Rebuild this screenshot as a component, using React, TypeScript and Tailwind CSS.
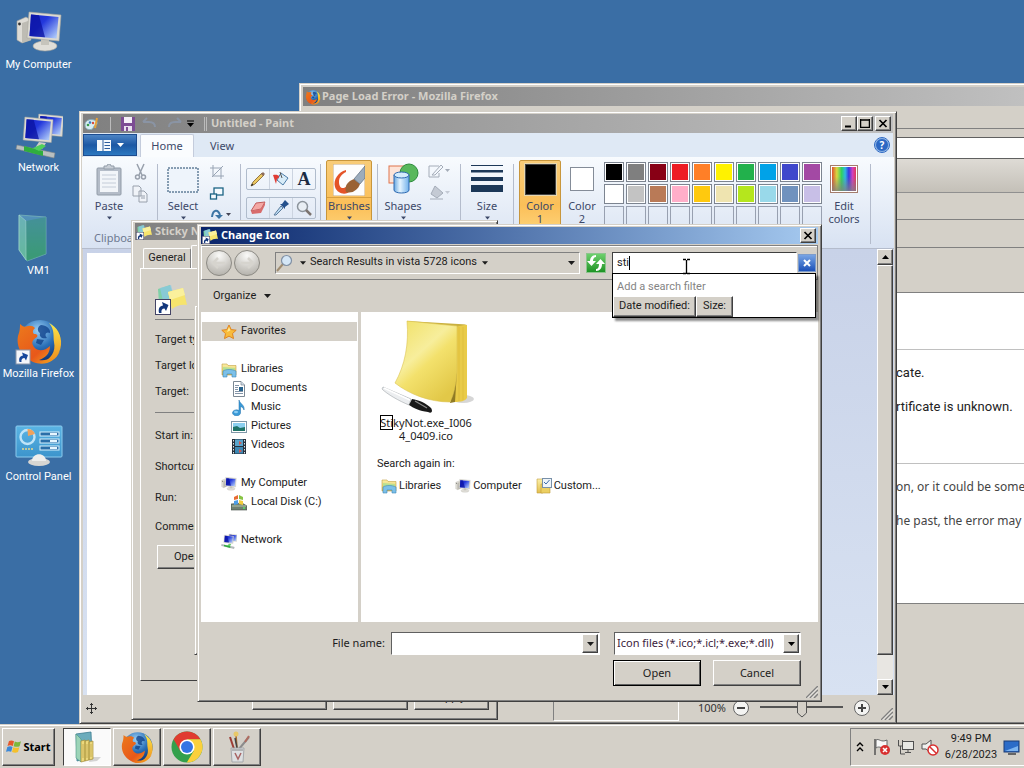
import type { ReactNode } from 'react';
import clsx from 'clsx';

const RAISED = 'border border-t-white border-l-white border-r-[#404040] border-b-[#404040] shadow-[inset_-1px_-1px_0_#808080]';
const SUNKEN = 'border border-t-[#808080] border-l-[#808080] border-r-white border-b-white';
const FRAME = 'absolute flex flex-col bg-[#d4d0c8] border border-t-[#d4d0c8] border-l-[#d4d0c8] border-r-[#404040] border-b-[#404040] shadow-[inset_1px_1px_0_#fff,inset_-1px_-1px_0_#808080] p-[2px]';
const NOTO = "font-['Noto_Sans','DejaVu_Sans',sans-serif]";

/* ---------- icons ---------- */

function Monitor({ x = 0, y = 0, s = 1 }: { x?: number; y?: number; s?: number }) {
  return (
    <g transform={`translate(${x} ${y}) scale(${s})`}>
      <path d="M1 0 L33 3 L31 29 L-1 26 Z" fill="#dcdad2" stroke="#a8a69e" strokeWidth=".6" />
      <path d="M3 2.5 L30.500 5 L28.500 26.500 L1.500 24 Z" fill="url(#screen)" />
      <path d="M3 2.5 L11 3.200 L17 25.300 L1.500 24 Z" fill="#0a12a0" opacity=".75" />
    </g>
  );
}

function Defs() {
  return (
    <svg width="0" height="0" className="absolute" aria-hidden="true">
      <defs>
        <linearGradient id="screen" x1="0" y1="0" x2="1" y2=".8"><stop offset="0" stopColor="#1a24c8" /><stop offset=".45" stopColor="#2338dc" /><stop offset="1" stopColor="#a9c4f8" /></linearGradient>
        <linearGradient id="note" x1="0" y1="0" x2=".7" y2="1"><stop offset="0" stopColor="#f0df62" /><stop offset=".45" stopColor="#f7ee9c" /><stop offset=".6" stopColor="#f3e16c" /><stop offset="1" stopColor="#e2c848" /></linearGradient>
        <linearGradient id="glass" x1="0" y1="0" x2="0" y2="1"><stop offset="0" stopColor="#5f9fc8" /><stop offset="1" stopColor="#45b866" /></linearGradient>
        <radialGradient id="globe" cx=".45" cy=".25" r=".8"><stop offset="0" stopColor="#9bd0f5" /><stop offset=".5" stopColor="#2a70b8" /><stop offset="1" stopColor="#0a2a6a" /></radialGradient>
        <linearGradient id="fox" x1="0" y1="0" x2="1" y2="1"><stop offset="0" stopColor="#ec7a1c" /><stop offset=".6" stopColor="#e8581a" /><stop offset="1" stopColor="#f8b820" /></linearGradient>
        <linearGradient id="foxTail" x1="0" y1="0" x2="0" y2="1"><stop offset="0" stopColor="#fbe84a" /><stop offset="1" stopColor="#ee8a1a" /></linearGradient>
        <linearGradient id="panel" x1="0" y1="0" x2="0" y2="1"><stop offset="0" stopColor="#5ab4e4" /><stop offset="1" stopColor="#3c94cc" /></linearGradient>
        <linearGradient id="folder" x1="0" y1="0" x2="0" y2="1"><stop offset="0" stopColor="#fbf0a8" /><stop offset="1" stopColor="#e2be4c" /></linearGradient>
        <linearGradient id="rainbow"><stop offset="0" stopColor="#e05030" /><stop offset=".2" stopColor="#d8d840" /><stop offset=".4" stopColor="#30d060" /><stop offset=".55" stopColor="#30b8e0" /><stop offset=".7" stopColor="#3838e0" /><stop offset=".85" stopColor="#d040c0" /><stop offset="1" stopColor="#e03858" /></linearGradient>
        <linearGradient id="fade" x1="0" y1="0" x2="0" y2="1"><stop offset="0" stopColor="#808080" stopOpacity="0" /><stop offset=".4" stopColor="#808080" stopOpacity="0" /><stop offset="1" stopColor="#808080" stopOpacity=".8" /></linearGradient>
        <linearGradient id="can"><stop offset="0" stopColor="#6aa8e0" /><stop offset=".4" stopColor="#e4f4ff" /><stop offset="1" stopColor="#70b0ea" /></linearGradient>
        <radialGradient id="orb" cx=".5" cy=".2" r=".8"><stop offset="0" stopColor="#fafaf8" /><stop offset=".6" stopColor="#cfcdc8" /><stop offset="1" stopColor="#b4b2ac" /></radialGradient>
      </defs>
    </svg>
  );
}

function ComputerIcon({ size = 48 }: { size?: number }) {
  return (
    <svg width={size} height={size} viewBox="0 0 48 48">
      <path d="M2 13 L11 9 L16 12 V32 L7 35 L2 32 Z" fill="#dedcd6" stroke="#a3a199" strokeWidth=".6" />
      <path d="M7 15 L16 12 V32 L7 35 Z" fill="#bebcb4" />
      <circle cx="4.500" cy="16" r="1.400" fill="#333" />
      <ellipse cx="30" cy="38" rx="12" ry="5" fill="#e0ded8" stroke="#a3a199" strokeWidth=".6" />
      <path d="M26 30 H34 V37 H26 Z" fill="#c6c4bc" />
      <Monitor x={13} y={4} />
    </svg>
  );
}

function NetworkIcon({ size = 48 }: { size?: number }) {
  return (
    <svg width={size} height={size} viewBox="0 0 48 48">
      <Monitor x={23} y={3} s={0.78} />
      <Monitor x={9} y={6} s={0.88} />
      <path d="M24 31 L31 32 L27 38 L20 37 Z" fill="#cfcdc6" />
      <path d="M2 34 L40 42 L39 47 L1 38 Z" fill="#b9bfc0" stroke="#7f8588" strokeWidth=".6" />
      <path d="M9 35 L28 40 L28 45 L9 40 Z" fill="#2fae3e" />
      <path d="M18 37 L27 33 L31 35 L24 40 Z" fill="#4fd05a" />
    </svg>
  );
}

function VmFolder() {
  return (
    <svg width="48" height="48" viewBox="0 0 48 48">
      <path d="M4 1 L31 3 V40 L12 47 L4 36 Z" fill="url(#glass)" opacity=".7" stroke="#8fd0c0" strokeWidth=".8" />
      <path d="M4 1 L11 7 V46 L4 36 Z" fill="#7cc8b4" opacity=".6" stroke="#c8f0e0" strokeWidth=".7" />
      <path d="M11 7 L31 3 V40 L12 47 Z" fill="#2f9068" opacity=".4" />
    </svg>
  );
}

function FirefoxIcon({ size = 48, shortcut = false }: { size?: number; shortcut?: boolean }) {
  return (
    <svg width={size} height={size} viewBox="0 0 48 48">
      <circle cx="25" cy="24" r="21" fill="url(#globe)" />
      <path d="M26 8 C31 8 36 12 35 16 C31 14 29 18 32 21 C27 22 24 20 25 16 C22 14 22 10 26 8 Z M22 22 L29 23 L26 28 L21 26 Z" fill="#12438c" opacity=".8" />
      <path d="M5 7 C7 9 9 10 11 9.500 C15 8 18 9 20 11 C18 13 17 15 19 17 C22 17 23 18 22 20 C17 23 16 26 19 30 C23 35 30 34 35 29 C35 37 30 41 24 43 C32 44 40 41 45 34 C40 46 28 49 18 45 C6 40 1 29 3 19 C4 16 5 14 5 7 Z" fill="url(#fox)" />
      <path d="M34 6 C42 10 47 18 46 28 C45 39 36 46 26 46 C36 42 41 35 39 25 C38 19 40 13 34 6 Z" fill="url(#foxTail)" />
      {shortcut && <ShortcutMark x={1} y={33} />}
    </svg>
  );
}

function ShortcutMark({ x, y }: { x: number; y: number }) {
  return (
    <g transform={`translate(${x} ${y})`}>
      <rect width="14" height="14" fill="#f4f6fa" stroke="#8a96ac" />
      <path d="M3.500 12 C2.500 8 4 6 7 5.500 L6 2.500 L12 5 L10 10.500 L8.500 8 C6 8 5 10 5.500 12 Z" fill="#17479c" />
    </g>
  );
}

function ControlPanelIcon() {
  return (
    <svg width="48" height="48" viewBox="0 0 48 48">
      <rect x="1" y="6" width="46" height="31" rx="1" fill="url(#panel)" stroke="#8ccbee" />
      <circle cx="12.500" cy="17" r="7" fill="none" stroke="#bfe4f8" strokeWidth="2.400" />
      <path d="M12.500 9 a8 8 0 0 1 7.500 5 l-7 2z" fill="#f0a25c" />
      {[12, 19, 26].map(y => (
        <g key={y}>
          <rect x="25" y={y} width="19" height="4" fill="#2a6ea8" stroke="#d6effc" />
          <rect x="35" y={y + 1} width="7" height="2" fill="#e6f6ff" />
        </g>
      ))}
      <path d="M7 29 H19" stroke="#e8d88c" strokeWidth="1.500" strokeDasharray="2 1" />
      <ellipse cx="24" cy="42" rx="11" ry="4" fill="#d8d6d2" />
      <path d="M17 41 C17 32 31 32 31 41 Z" fill="#efeeec" />
    </svg>
  );
}

function StickyMini({ size = 16 }: { size?: number }) {
  return (
    <svg width={size} height={size} viewBox="0 0 32 32">
      <path d="M3 6 L15 2 L20 18 L4 20 Z" fill="#7fd0a8" />
      <path d="M5 5 L16 2 L19 14 L8 18 Z" fill="#8cc8e8" opacity=".7" />
      <path d="M13 9 L28 5 L32 22 C26 21 21 23 17 26 Z" fill="#f6e46c" />
      <path d="M13 9 L28 5 L30 12 L15 17 Z" fill="#faf09c" />
      <g transform="translate(0 16)">
        <rect x=".5" y=".5" width="15" height="15" fill="#fff" stroke="#446" />
        <path d="M4 14 C3 9 5 7 8 6.500 L7 3 L13.500 6 L11 12 L9.500 9.500 C7 9.500 6 11 6.500 14 Z" fill="#12377c" />
      </g>
    </svg>
  );
}

function PaletteIcon() {
  return (
    <svg width="16" height="16" viewBox="0 0 16 16">
      <path d="M1 9 C1 4 6 3 10 4 C14 5 14 9 11 9.500 C9 10 10 13 7 13.500 C3 14 1 12 1 9 Z" fill="#d8eef4" stroke="#8ab0bc" />
      <circle cx="4" cy="9" r="1.300" fill="#3a9c4c" /><circle cx="6" cy="6.500" r="1.300" fill="#3a78c0" /><circle cx="9" cy="7" r="1.200" fill="#d84a3c" />
      <path d="M11 12 L13 2" stroke="#e8a33c" strokeWidth="2" />
    </svg>
  );
}

function StickyPad() {
  return (
    <svg width="98" height="96" viewBox="0 0 98 96">
      <ellipse cx="86" cy="79" rx="11" ry="4" fill="#777" opacity=".3" />
      <path d="M78 5 L90 5 V78 C88 81 84 82 77 82 Z" fill="#e9cb48" />
      <path d="M82 7 V81 M86 7 V80" stroke="#dab838" strokeWidth=".6" />
      <path d="M30 1 L90 4.500 L80 6.500 L30 2 Z" fill="#c9b040" />
      <path d="M80 50 L78 82 L73 83 Z" fill="#8f7a24" />
      <path d="M30 1 L80 6 V52 C79 64 77 74 73 82 C52 82 32 74 18 63 C28 45 32 24 30 1 Z" fill="url(#note)" stroke="#dcc350" strokeWidth=".6" />
      <path d="M6 67 L34 79 L32 85 C22 81 10 74 5 69 Z" fill="#eceef0" stroke="#a0a4a8" strokeWidth=".6" />
      <path d="M7 68 L33 80" stroke="#fff" strokeWidth="1.500" />
      <path d="M35 79 C42 80 49 83 54 88 C56 91 55 94 51 92 C43 91 36 88 32 85 Z" fill="#191919" />
      <path d="M38 81 L50 88" stroke="#8a8a8a" strokeWidth="1.200" />
    </svg>
  );
}

function LibraryIcon() {
  return (
    <svg width="16" height="16" viewBox="0 0 16 16">
      <path d="M1 2 H6 L7 3.500 H15 V13 H1 Z" fill="url(#folder)" stroke="#c4a040" strokeWidth=".6" />
      <path d="M2 5 L14 6 V8 L2 8 Z" fill="#b8e094" />
      <path d="M2 9 C5 7 11 7 15 9 V15 H11 V12 H6 V15 H2 Z" fill="#7cc0e8" stroke="#3c88b8" strokeWidth=".6" />
    </svg>
  );
}

function DocumentIcon() {
  return (
    <svg width="16" height="16" viewBox="0 0 16 16">
      <path d="M2.500 .5 H10 L13.500 4 V15.500 H2.500 Z" fill="#fff" stroke="#7c8894" />
      <path d="M10 .5 V4 H13.500" fill="#cfdbe6" stroke="#7c8894" strokeWidth=".7" />
      <path d="M4 4.500 H8 M4 6.500 H7 M4 8.500 H7 M4 10.500 H12 M4 12.500 H12" stroke="#8494a8" />
      <rect x="8" y="6" width="4" height="4" fill="#27628c" />
    </svg>
  );
}

function MusicIcon() {
  return (
    <svg width="16" height="16" viewBox="0 0 16 16">
      <path d="M8 0 C9 4 14 5 13 10 C12.500 8 11 7 9.500 6.500 V13 A4 3 0 1 1 8 10.500 Z" fill="#3a9ad8" stroke="#1c6ca8" strokeWidth=".5" />
      <ellipse cx="5" cy="12" rx="2" ry="1.200" fill="#8ccdf4" />
    </svg>
  );
}

function PictureIcon() {
  return (
    <svg width="16" height="16" viewBox="0 0 16 16">
      <rect x=".5" y="2.500" width="15" height="11" fill="#fff" stroke="#8098a8" />
      <rect x="2" y="4" width="12" height="8" fill="#8cd0f0" />
      <path d="M2 8 L6 7 L9 9 L14 8 V12 H2 Z" fill="#1f7468" />
    </svg>
  );
}

function VideoIcon() {
  return (
    <svg width="16" height="16" viewBox="0 0 16 16">
      <rect x="1" y="1" width="14" height="15" fill="#26303c" />
      <rect x="4" y="1.500" width="8" height="6.500" fill="#58a4cc" /><rect x="4" y="9" width="8" height="6.500" fill="#3c88b4" />
      <path d="M8 3 l3 2 -3 2z M8 11 l3 2 -3 2z" fill="#d45a50" />
      <path d="M2.500 2 V16 M13.500 2 V16" stroke="#dfe4e8" strokeDasharray="1.500 1.500" />
    </svg>
  );
}

function DiskIcon() {
  return (
    <svg width="16" height="16" viewBox="0 0 16 16">
      <path d="M0 9 L11 8 L16 11 V15 H0 Z" fill="#708070" stroke="#404c44" strokeWidth=".6" />
      <path d="M1 11 H15" stroke="#b4c4a8" />
      <path d="M3 2 L7 0 V4 L3 5 Z" fill="#e86c34" /><path d="M8 0 L12 2 V5 L8 4 Z" fill="#88c444" />
      <path d="M3 6 L7 5 V9 L3 10 Z" fill="#4c9ce4" /><path d="M8 5 L12 6 V10 L8 9 Z" fill="#f4cc3c" />
      <circle cx="13" cy="13" r="1" fill="#58e06c" />
    </svg>
  );
}

function StarIcon() {
  return (
    <svg width="16" height="16" viewBox="0 0 16 16">
      <path d="M8 1 L10.200 5.600 L15.200 6.200 L11.500 9.600 L12.500 14.600 L8 12.100 L3.500 14.600 L4.500 9.600 L.8 6.200 L5.800 5.600 Z" fill="#f8bc3c" stroke="#e08420" />
      <path d="M8 3 L9.300 6.600 L6 8 Z" fill="#fdeb9c" />
    </svg>
  );
}

function CustomIcon() {
  return (
    <svg width="16" height="16" viewBox="0 0 16 16">
      <path d="M1 1 H7 V15 H1 Z" fill="url(#folder)" stroke="#c4a040" strokeWidth=".6" />
      <path d="M5 6 H14 V15 H5 Z" fill="#eccf62" stroke="#c09a38" strokeWidth=".6" />
      <rect x="6.500" y=".5" width="9" height="9" fill="#eef4fa" stroke="#7890a8" />
      <path d="M8 4 l2 2 3.500 -4" fill="none" stroke="#3c6ca8" />
    </svg>
  );
}

function Magnifier() {
  return (
    <svg width="18" height="18" viewBox="0 0 18 18">
      <path d="M1 17 L7 10" stroke="#a08c70" strokeWidth="2" />
      <circle cx="10.500" cy="6.500" r="5" fill="#d4e6f6" stroke="#8090a4" strokeWidth="1.200" />
    </svg>
  );
}

function Arrow({ className }: { className?: string }) {
  return (
    <svg width="7" height="4" viewBox="0 0 7 4" className={clsx('shrink-0', className)}>
      <path d="M0 0 H7 L3.500 4 Z" fill="currentColor" />
    </svg>
  );
}

function ChromeIcon() {
  return (
    <svg width="32" height="32" viewBox="0 0 32 32">
      <circle cx="16" cy="16" r="15.500" fill="#34a04c" />
      <path d="M16 16 L2.600 8.200 A15.500 15.500 0 0 1 29.400 8.200 L16 8.200 Z" fill="#e03c30" />
      <path d="M16 8.200 H29.400 A15.500 15.500 0 0 1 15.800 31.500 L22.700 20 Z" fill="#fbd03c" />
      <path d="M2.600 8.200 L9.300 20 L16 8 Z" fill="#e03c30" />
      <circle cx="16" cy="16" r="7.600" fill="#fff" /><circle cx="16" cy="16" r="6" fill="#3474e4" />
    </svg>
  );
}

function LibrariesLarge() {
  return (
    <svg width="32" height="32" viewBox="0 0 32 32">
      <path d="M20 26 L30 26 L26 30 L18 31 Z" fill="#999" opacity=".4" />
      <path d="M5 3 L20 1 L21 26 L6 30 Z" fill="#6cacbc" stroke="#3c7c90" strokeWidth=".8" />
      <path d="M5 3 L10 8 V31 L5 27 Z" fill="#9cd4b8" stroke="#4c9484" strokeWidth=".6" />
      <path d="M10 10 L14 9 V30 L10 31 Z M14 10 L18 9 V29 L14 30 Z M18 11 L22 10 V28 L18 29 Z" fill="#ecd87c" stroke="#a48c38" strokeWidth=".7" />
      <path d="M12 13 V27 M16 13 V27 M20 13 V26" stroke="#c8b058" />
    </svg>
  );
}

function PaintCup() {
  return (
    <svg width="32" height="32" viewBox="0 0 32 32">
      <path d="M16 17 L15 4" stroke="#a8682c" strokeWidth="1.500" /><circle cx="15" cy="3" r="2.500" fill="#e8c868" />
      <path d="M13 18 L9 6" stroke="#9c3c34" strokeWidth="2" /><path d="M18 18 L28 6" stroke="#8c8c8c" strokeWidth="2" />
      <path d="M28 5 L24 11" stroke="#b06c60" strokeWidth="2" /><path d="M16 17 L14 7" stroke="#444" strokeWidth="1.500" />
      <path d="M10 17 H23 L22 31 H11 Z" fill="#dfe2e5" stroke="#a0a4a8" opacity=".9" />
      <path d="M11 19 H22" stroke="#888" />
      <path d="M14 22 L17 28 L20 22" stroke="#a86464" strokeWidth="1.500" fill="none" />
    </svg>
  );
}

function WindowsFlag() {
  return (
    <svg width="16" height="16" viewBox="0 0 16 16">
      <path d="M3 2 C5 1 6.500 1.500 8 2.300 L6.800 7 C5 6 3.500 6 1.500 7 Z" fill="#e4582c" />
      <path d="M8.800 2.600 C11 3.500 13 3.200 15 2.200 L13.600 7.200 C12 8 9.500 8 7.600 7.200 Z" fill="#7cb83c" />
      <path d="M1.300 8 C3.500 7 5 7.200 6.500 7.900 L5.200 12.800 C3.500 12 2 12 0 12.800 Z" fill="#3c88d8" />
      <path d="M7.300 8.200 C9.500 9 11.500 9 13.300 8.200 L12 13 C10 14 8 13.800 6 13 Z" fill="#f4c02c" />
    </svg>
  );
}

/* ---------- shared controls ---------- */

function CaptionButton({ label, children }: { label: string; children: ReactNode }) {
  return (
    <button aria-label={label} className={clsx(RAISED, 'w-4 h-[15px] bg-[#d4d0c8] flex items-center justify-center')}>
      <svg width="10" height="9" viewBox="0 0 10 9" stroke="#000" fill="none">{children}</svg>
    </button>
  );
}

const Cross = () => <path d="M1.500 1 L8.500 8 M8.500 1 L1.500 8" strokeWidth="1.700" />;

function Grip({ className }: { className?: string }) {
  return (
    <svg width="12" height="12" viewBox="0 0 12 12" className={className}>
      <path d="M0 12 L12 0 M4 12 L12 4 M8 12 L12 8" stroke="#808080" strokeWidth="1.500" />
      <path d="M1.500 12 L12 1.500 M5.500 12 L12 5.500" stroke="#fff" strokeWidth=".7" />
    </svg>
  );
}

/* ---------- desktop ---------- */

const desktopItems = [
  { label: 'My Computer', icon: <ComputerIcon /> },
  { label: 'Network', icon: <NetworkIcon /> },
  { label: 'VM1', icon: <VmFolder /> },
  { label: 'Mozilla Firefox', icon: <FirefoxIcon shortcut /> },
  { label: 'Control Panel', icon: <ControlPanelIcon /> },
];

function DesktopIcons() {
  return (
    <div className="flex flex-col w-[77px]">
      {desktopItems.map(d => (
        <button key={d.label} className="h-[103px] pt-2 flex flex-col items-center text-white">
          {d.icon}
          <span className="leading-[18px] whitespace-nowrap">{d.label}</span>
        </button>
      ))}
    </div>
  );
}

/* ---------- Firefox ---------- */

function FirefoxWindow() {
  return (
    <section className={clsx(FRAME, 'left-[299px] right-[-4px] top-[83px] bottom-[44px]')}>
      <div className={clsx(NOTO, 'h-[19px] mx-px mt-px flex items-center gap-px px-[2px] bg-linear-to-r from-[#808080] to-[#c0c0c0] text-[#d4d0c8] font-bold')}>
        <FirefoxIcon size={16} />
        <h2>Page Load Error - Mozilla Firefox</h2>
      </div>
      <div className="h-[23px] border-b border-[#808080]" />
      <div className="h-2" />
      <div className="h-[22px] bg-white border border-[#606060]" />
      <div className="h-[34px] bg-linear-to-b from-[#dedbd5] to-[#c4c0b8] border-b border-[#909090]" />
      <div className="h-[27px] border-b border-[#808080]" />
      <div className="h-7 border-b border-[#808080]" />
      <div className="h-[45px] border-b border-[#808080]" />
      <div className="h-[310px] bg-white flex flex-col pl-[594px] whitespace-nowrap text-[#222]">
        <div className="h-[57px] -ml-[594px] border-b border-[#c0c0c0]" />
        <p className="mt-3 text-[13px] leading-[22px]">cate.</p>
        <p className="mt-3 text-[13px] leading-[22px]">rtificate is unknown.</p>
        <div className="h-[46px] -ml-[594px] border-b border-[#c0c0c0]" />
        <p className={clsx(NOTO, 'mt-3 text-xs leading-[22px] text-[#444]')}>on, or it could be some</p>
        <p className={clsx(NOTO, 'mt-3 text-xs leading-[22px] text-[#444]')}>he past, the error may</p>
      </div>
      <div className="flex-1 border-t border-[#808080]" />
    </section>
  );
}

/* ---------- Paint ---------- */

const palette = [
  'bg-black', 'bg-[#7f7f7f]', 'bg-[#880015]', 'bg-[#ed1c24]', 'bg-[#ff7f27]', 'bg-[#fff200]', 'bg-[#22b14c]', 'bg-[#00a2e8]', 'bg-[#3f48cc]', 'bg-[#a349a4]',
  'bg-white', 'bg-[#c3c3c3]', 'bg-[#b97a57]', 'bg-[#ffaec9]', 'bg-[#ffc90e]', 'bg-[#efe4b0]', 'bg-[#b5e61d]', 'bg-[#99d9ea]', 'bg-[#7092be]', 'bg-[#c8bfe7]',
];

const toolRows = [
  [
    { label: 'Pencil', art: <><path d="M1 15 L3 11 L12 2 L14 4 L5 13 Z" fill="#ecc860" stroke="#7c5c28" strokeWidth=".8" /><path d="M1 15 L2 12.500 L3.500 14 Z" fill="#222" /><path d="M11 3 L13 5 L15 3 L13 1 Z" fill="#8c6c5c" /></> },
    { label: 'Fill', art: <><path d="M8 2 L15 7 L10 14 L4 9 Z" fill="#d8ecf8" stroke="#4c7ca8" /><path d="M0 4 C6 3 8 6 4 8 L3 13 Z" fill="#e03c34" /><path d="M7 1 L9 7" stroke="#555" /></> },
    { label: 'Text', art: null },
  ],
  [
    { label: 'Eraser', art: <><path d="M6 3 L15 2 L11 9 L1 11 Z" fill="#f4a8a4" stroke="#c05c5c" /><path d="M1 11 L11 9 L15 2 V5 L11 13 L2 14 Z" fill="#d86c6c" /></> },
    { label: 'Color picker', art: <><path d="M1 15 L8 6 L10 8 L3 15 Z" fill="#bcdcf4" stroke="#5c7c9c" /><path d="M7 4 L9 4 L12 0 L16 4 L12 7 L12 9 Z" fill="#24508c" /></> },
    { label: 'Magnifier', art: <><circle cx="6.500" cy="6.500" r="5" fill="#e8eef4" stroke="#8c949c" strokeWidth="1.500" /><path d="M10 10 L15 15" stroke="#7c7470" strokeWidth="2.500" /></> },
  ],
];

function Divider() {
  return <div className="w-px h-[80px] mt-[4px] bg-[#b4bccc] shrink-0" />;
}

function Ribbon() {
  return (
    <div className="h-[92px] flex pt-[3px] bg-linear-to-b from-[#f8fbfe] to-[#d8e2f2] border-b border-[#b4bccc] text-[#3c4868] whitespace-nowrap overflow-hidden shrink-0">
      <div className="w-[75px] shrink-0 flex flex-col">
        <div className="flex gap-px pl-[5px]">
          <button className="w-11 flex flex-col items-center">
            <svg width="26" height="32" viewBox="0 0 26 32" className="mt-1">
              <rect x="1" y="4" width="24" height="27" rx="1" fill="#b4bcc8" stroke="#929ca8" />
              <rect x="4" y="7" width="18" height="21" fill="#f2f5f9" />
              <path d="M8 5 H18 V2 H15 a2 2 0 0 0 -4 0 H8 Z" fill="#c8ced6" stroke="#929ca8" />
              <path d="M6 11 H20 M6 15 H20 M6 19 H20 M6 23 H20" stroke="#c4ccd8" />
            </svg>
            <span className="leading-4 mt-[2px]">Paste</span>
            <Arrow className="mt-[2px] w-[5px]" />
          </button>
          <div className="flex flex-col gap-1 pt-[3px]">
            <svg width="18" height="18" viewBox="0 0 18 18" fill="none" stroke="#98a0ac" strokeWidth="1.500">
              <path d="M5 1 L10 12 M12 1 L7 12" /><circle cx="5.500" cy="14" r="2" /><circle cx="11.500" cy="14" r="2" />
            </svg>
            <svg width="18" height="18" viewBox="0 0 18 18" fill="#f0f3f8" stroke="#98a0ac">
              <path d="M1 1 H7 L9 3 V11 H1 Z M7 6 H12 L15 9 V17 H7 Z M9 11 H13 M9 13 H13" />
            </svg>
          </div>
        </div>
        <span className="pl-3 mt-[10px] leading-4 text-[#6c7890]">Clipboard</span>
      </div>
      <Divider />
      <div className="w-[82px] shrink-0 flex pl-[3px] gap-1">
        <button className="w-11 flex flex-col items-center">
          <svg width="32" height="26" viewBox="0 0 32 26" className="mt-[7px]">
            <rect x="1" y="1" width="30" height="24" fill="#eef4fb" stroke="#1c4468" strokeDasharray="2 1" />
          </svg>
          <span className="leading-4 mt-[5px]">Select</span>
          <Arrow className="mt-[2px] w-[5px]" />
        </button>
        <div className="flex flex-col gap-1 pt-[3px]">
          <svg width="16" height="18" viewBox="0 0 16 18" fill="none" stroke="#98a4b4"><path d="M4 2 V13 H15 M1 5 H12 V16 M3 14 L14 3" /></svg>
          <svg width="16" height="18" viewBox="0 0 16 18" fill="#f4fafe" stroke="#1c6484" strokeWidth="1.300"><rect x="5" y="3" width="9" height="7" /><rect x="1.500" y="9" width="6" height="5" /></svg>
          <svg width="24" height="18" viewBox="0 0 24 18"><path d="M3 10 C4 2 9 2 11 8" fill="none" stroke="#3c74a4" strokeWidth="2" /><path d="M6 8 h8 l-4 4z" fill="#3c74a4" /><path d="M17 6 h5 l-2.500 3z" fill="#445" /></svg>
        </div>
      </div>
      <Divider />
      <div className="w-[79px] shrink-0 flex flex-col gap-[7px] pl-[5px] pt-2">
        {toolRows.map((row, i) => (
          <div key={i} className="flex w-[70px] h-[22px] border border-[#b0bccc] rounded-[2px] divide-x divide-[#ccd4e0]">
            {row.map(t => (
              <button key={t.label} aria-label={t.label} className="flex-1 flex items-center justify-center">
                {t.art ? <svg width="16" height="16" viewBox="0 0 16 16">{t.art}</svg> : <span className="font-['Liberation_Serif',serif] font-bold text-lg leading-4 text-[#1c2c44]">A</span>}
              </button>
            ))}
          </div>
        ))}
      </div>
      <Divider />
      <div className="w-14 shrink-0 flex justify-center">
        <button className="w-[46px] h-[90px] flex flex-col items-center rounded-[2px] border border-[#c8963c] bg-linear-to-b from-[#f8cc78] via-[#fbbf58] to-[#fee08c]">
          <svg width="32" height="32" viewBox="0 0 32 32" className="mt-[3px]">
            <rect width="32" height="32" fill="#fdfdfd" stroke="#c8a878" />
            <path d="M13 6 C5 8 0 16 2 23 C5 31 14 31 17 27 L14 22 C10 26 6 24 6 18 C6 13 9 10 13 8 Z" fill="#e45428" />
            <path d="M13 28 C11 22 15 17 21 15 L27 20 C25 26 19 30 13 28 Z" fill="#9a6234" />
            <path d="M21 15 L32 2 V14 L27 20 Z" fill="#9cacbc" stroke="#5c6c7c" strokeWidth=".7" />
          </svg>
          <span className="w-full leading-4 mt-px border-t border-[#d8a040]">Brushes</span>
          <Arrow className="mt-[2px] w-[5px]" />
        </button>
      </div>
      <Divider />
      <div className="w-[82px] shrink-0 flex pl-[3px]">
        <button className="w-11 flex flex-col items-center">
          <svg width="32" height="32" viewBox="0 0 32 32" className="mt-[3px]">
            <rect x="2" y="3" width="18" height="17" fill="#fde4d8" stroke="#e0744c" />
            <circle cx="22" cy="10" r="9" fill="#58b85c" stroke="#2c8c3c" />
            <path d="M7 12 V27 C7 31 22 31 22 27 V12" fill="url(#can)" stroke="#2c68b0" />
            <ellipse cx="14.500" cy="12" rx="7.500" ry="3" fill="#d4ecfc" stroke="#2c68b0" />
          </svg>
          <span className="leading-4 mt-[3px]">Shapes</span>
          <Arrow className="mt-[2px] w-[5px]" />
        </button>
        <div className="flex flex-col gap-[3px] pt-[3px] pl-[2px]">
          <svg width="26" height="18" viewBox="0 0 26 18" fill="none" stroke="#a4acb8"><path d="M12 3 H2 V14 H12 V10 M5 12 L14 2 L16 4 L8 12 Z" /><path d="M18 6 h5 l-2.500 3z" fill="#a4acb8" stroke="none" /></svg>
          <svg width="26" height="18" viewBox="0 0 26 18" fill="#c4cad4" stroke="#a4acb8"><path d="M8 2 L16 9 L10 14 L4 10 Z M3 15 H16" /><path d="M18 7 h5 l-2.500 3z" stroke="none" /></svg>
        </div>
      </div>
      <Divider />
      <button className="w-[52px] shrink-0 flex flex-col items-center">
        <svg width="32" height="28" viewBox="0 0 32 28" className="mt-[5px]" fill="#1c3858"><path d="M0 0 H32 V1 H0 Z M0 5 H32 V7.500 H0 Z M0 12 H32 V16 H0 Z M0 20 H32 V27 H0 Z" /></svg>
        <span className="leading-4 mt-[5px]">Size</span>
        <Arrow className="mt-[2px] w-[5px]" />
      </button>
      <Divider />
      <div className="w-[90px] shrink-0 flex pl-[5px] leading-[13px]">
        <button className="w-[42px] h-[90px] flex flex-col items-center rounded-[2px] border border-[#c8963c] bg-linear-to-b from-[#f8cc78] via-[#fbbf58] to-[#fee08c]">
          <span className="w-[31px] h-[31px] mt-[3px] bg-black border border-[#444] outline-1 outline-[#e8d8b0]" />
          <span className="mt-1">Color<br />1</span>
        </button>
        <button className="w-[42px] h-[90px] flex flex-col items-center">
          <span className="w-6 h-6 mt-[7px] bg-white border border-[#848c98]" />
          <span className="mt-2">Color<br />2</span>
        </button>
      </div>
      <div className="flex flex-wrap content-start gap-[2px] w-[222px] shrink-0 pt-[2px]">
        {palette.map(c => (
          <button key={c} aria-label="Color swatch" className={clsx('w-5 h-5 border border-[#7c8490] shadow-[inset_0_0_0_1px_#fff]', c)} />
        ))}
        {palette.slice(0, 10).map(c => (
          <button key={c} aria-label="Empty swatch" className="w-5 h-5 border border-[#98a0b0]" />
        ))}
      </div>
      <button className="w-[36px] shrink-0 flex flex-col items-center leading-[13px]">
        <svg width="28" height="28" viewBox="0 0 28 28" className="mt-[5px]">
          <rect x=".5" y=".5" width="27" height="27" fill="#fff" stroke="#a47c6c" />
          <rect x="2" y="2" width="24" height="24" fill="url(#rainbow)" /><rect x="2" y="2" width="24" height="24" fill="url(#fade)" />
        </svg>
        <span className="mt-[6px]">Edit<br />colors</span>
      </button>
      <div className="w-2 shrink-0" />
      <Divider />
    </div>
  );
}

function PaintWindow() {
  return (
    <section className={clsx(FRAME, NOTO, 'left-[79px] top-[111px] w-[818px] h-[613px]')}>
      <div className="h-[19px] mx-px flex items-center pl-px pr-[2px] bg-linear-to-r from-[#808080] to-[#c0c0c0] text-[#d4d0c8] font-bold shrink-0">
        <PaletteIcon />
        <div className="w-px h-[14px] bg-[#bbb] ml-[10px]" />
        <svg width="14" height="14" viewBox="0 0 14 14" className="ml-[10px]"><path d="M0 0 H14 V14 H0 Z" fill="#7c4c94" /><rect x="3" width="8" height="6" fill="#f4f0f8" /><rect x="3" y="9" width="8" height="5" fill="#e8e0ee" /><rect x="5" y="10" width="2" height="4" fill="#7c4c94" /></svg>
        <svg width="44" height="14" viewBox="0 0 44 14" className="ml-[6px]" fill="none" stroke="#8a94a4" strokeWidth="2"><path d="M2 5 H8 C12 5 14 7 14 10 M2 5 l4 -4 M40 5 H34 C30 5 28 7 28 10 M40 5 l-4 -4" /></svg>
        <svg width="9" height="8" viewBox="0 0 9 8" className="ml-px"><path d="M1 1 H8" stroke="#000" /><path d="M1 3 H8 L4.500 7 Z" /></svg>
        <div className="w-[3px] h-[14px] border-x border-[#bbb] ml-[9px]" />
        <h2 className="ml-1 flex-1">Untitled - Paint</h2>
        <CaptionButton label="Minimize"><path d="M1 7.500 H7" strokeWidth="2" /></CaptionButton>
        <CaptionButton label="Maximize"><path d="M.5 1 H9.500 M.5 0 V8.500 H9.500 V0" strokeWidth="1.500" /></CaptionButton>
        <span className="w-[2px]" />
        <CaptionButton label="Close"><Cross /></CaptionButton>
      </div>
      <div className="h-6 mx-px shrink-0 flex items-end bg-[#dfe9f5] text-[#3c4868]">
        <button aria-label="Paint menu" className="w-[54px] h-[22px] self-center flex items-center justify-center gap-[6px] text-white bg-linear-to-b from-[#4c84c4] via-[#1c58a4] to-[#2c78c0] border border-[#1c4c90]">
          <svg width="14" height="11" viewBox="0 0 14 11"><rect width="14" height="11" fill="#f4f8fc" /><path d="M6 0 V11 M7.500 2.500 H13 M7.500 5.500 H13 M7.500 8.500 H13" stroke="#2c5c9c" /></svg>
          <Arrow />
        </button>
        <button className="ml-[3px] w-[54px] h-[23px] bg-[#fafcfe] border border-b-0 border-[#c4ccdc] rounded-t-[2px]">Home</button>
        <button className="ml-3 px-1 h-[22px]">View</button>
        <span className="flex-1" />
        <button aria-label="Help" className="self-center mr-1 size-[14px] rounded-full border border-[#8cb4e4] outline-1 outline-[#2c68c4] bg-[#2c68c4] text-white font-bold text-[10px] leading-3">?</button>
      </div>
      <Ribbon />
      <div className="flex-1 flex min-h-0 ml-px bg-linear-to-b from-[#c8d2e8] to-[#d8e2f2]">
        <div className="flex-1 pl-1 pt-1"><div className="w-[730px] h-full bg-white" /></div>
        <div className="w-4 mr-px flex flex-col bg-[#e8e6e2]">
          <button aria-label="Scroll up" className={clsx(RAISED, 'h-4 bg-[#d4d0c8] flex items-center justify-center text-black')}><Arrow className="rotate-180" /></button>
          <div className={clsx(RAISED, 'h-[390px] bg-[#d4d0c8]')} />
          <div className="flex-1" />
          <button aria-label="Scroll down" className={clsx(RAISED, 'h-4 bg-[#d4d0c8] flex items-center justify-center text-black')}><Arrow /></button>
        </div>
      </div>
      <div className="h-[26px] shrink-0 flex items-center gap-[11px] pl-1 text-[#333]">
        <svg width="11" height="11" viewBox="0 0 11 11" stroke="#333" fill="none"><path d="M5.500 0 V11 M0 5.500 H11 M4 2 L5.500 .5 L7 2 M4 9 L5.500 10.500 L7 9 M2 4 L.5 5.500 L2 7 M9 4 L10.500 5.500 L9 7" /></svg>
        <span className="flex-1" />
        <div className={clsx(SUNKEN, 'w-[126px] h-full')} />
        <span className="ml-2">100%</span>
        <button aria-label="Zoom out" className="-ml-1 size-4 rounded-full border border-[#666] bg-[#f4f4f2] flex items-center justify-center"><span className="w-2 h-[2px] bg-[#444]" /></button>
        <div className="relative w-[83px] h-5">
          <input aria-label="Zoom" type="range" defaultValue={50} className="absolute inset-0 opacity-0" />
          <svg width="83" height="20" viewBox="0 0 83 20"><path d="M0 9 H83" stroke="#555" strokeWidth="2" /><path d="M37.500 1 H46.500 V15 L42 19 L37.500 15 Z" fill="#d4d0c8" stroke="#555" /></svg>
        </div>
        <button aria-label="Zoom in" className="size-4 rounded-full border border-[#666] bg-[#f4f4f2] flex items-center justify-center">
          <svg width="8" height="8" viewBox="0 0 8 8" stroke="#444" strokeWidth="2"><path d="M4 0 V8 M0 4 H8" /></svg>
        </button>
        <Grip className="self-end mb-px mr-px" />
      </div>
    </section>
  );
}

/* ---------- Sticky Notes properties ---------- */

function PropertiesWindow() {
  return (
    <section className={clsx(FRAME, 'left-[131px] top-[220px] w-[367px] h-[500px] overflow-hidden')}>
      <div className={clsx(NOTO, 'h-[17px] mx-px shrink-0 flex items-center gap-[3px] pl-px bg-linear-to-r from-[#808080] to-[#c0c0c0] text-[#d4d0c8] font-bold whitespace-nowrap')}>
        <StickyMini />
        <h2 className="w-11 overflow-hidden">Sticky Notes Properties</h2>
      </div>
      <div className="flex items-end mt-1 ml-[9px] h-6 shrink-0">
        <button className="w-12 h-5 border border-b-0 border-white border-r-[#808080] rounded-t-[2px] text-center">General</button>
        <button className="w-14 h-[23px] border border-b-0 border-white border-r-[#404040] rounded-t-[2px]">Shortcut</button>
      </div>
      <div className="mx-[6px] h-[413px] shrink-0 flex flex-col px-[14px] border border-t-white border-l-white border-r-[#404040] border-b-[#404040] whitespace-nowrap">
        <div className="h-[51px] pt-[14px] border-b border-[#808080]"><StickyMini size={32} /></div>
        <p className="mt-[7px] leading-[26px]">Target type:</p>
        <p className="leading-[26px]">Target location:</p>
        <p className="leading-[26px]">Target:</p>
        <div className="h-2 border-b border-[#808080]" />
        <p className="mt-2 leading-[30px]">Start in:</p>
        <p className="leading-[31px]">Shortcut key:</p>
        <p className="leading-[31px]">Run:</p>
        <p className="leading-[28px]">Comment:</p>
        <button className={clsx(RAISED, 'mt-1 ml-[2px] w-[124px] h-6 pl-4 text-left')}>Open File Location</button>
      </div>
      <div className="mt-[6px] flex justify-end gap-[6px] pr-[6px]">
        {['OK', 'Cancel', 'Apply'].map(b => (
          <button key={b} className={clsx(RAISED, 'w-[75px] h-[23px]')}>{b}</button>
        ))}
      </div>
    </section>
  );
}

/* ---------- Change Icon ---------- */

const places = [
  { label: 'Favorites', icon: <StarIcon />, cls: 'pl-[19px] bg-[#d4d0c8] mb-[19px]' },
  { label: 'Libraries', icon: <LibraryIcon />, cls: 'pl-[19px]' },
  { label: 'Documents', icon: <DocumentIcon />, cls: 'pl-[29px]' },
  { label: 'Music', icon: <MusicIcon />, cls: 'pl-[29px]' },
  { label: 'Pictures', icon: <PictureIcon />, cls: 'pl-[29px]' },
  { label: 'Videos', icon: <VideoIcon />, cls: 'pl-[29px] mb-[19px]' },
  { label: 'My Computer', icon: <ComputerIcon size={16} />, cls: 'pl-[19px]' },
  { label: 'Local Disk (C:)', icon: <DiskIcon />, cls: 'pl-[29px] mb-[19px]' },
  { label: 'Network', icon: <NetworkIcon size={16} />, cls: 'pl-[19px]' },
];

function NavOrb({ label, flip }: { label: string; flip?: boolean }) {
  return (
    <button aria-label={label}>
      <svg width="28" height="28" viewBox="0 0 28 28" className={clsx(flip && '-scale-x-100')}>
        <circle cx="14" cy="14" r="12.500" fill="url(#orb)" stroke="#8c8a84" />
        <path d="M8 14 L13 9 M8 14 L13 19 M8 14 H20" stroke="#d6d4ce" strokeWidth="2.500" fill="none" />
      </svg>
    </button>
  );
}

function ChangeIconDialog() {
  return (
    <section className={clsx(FRAME, 'left-[197px] top-[224px] w-[625px] h-[478px] text-[#1c1c1c]')}>
      <div className={clsx(NOTO, 'h-[17px] mx-px shrink-0 flex items-center gap-[3px] pl-px pr-[2px] bg-linear-to-r from-[#0a246a] to-[#a6caf0] text-white font-bold')}>
        <StickyMini />
        <h2 className="flex-1">Change Icon</h2>
        <CaptionButton label="Close"><Cross /></CaptionButton>
      </div>
      <div className="h-[35px] mt-px mx-px shrink-0 flex items-center pl-[3px] pr-1 border border-[#808080] border-l-white shadow-[inset_0_1px_0_#fff]">
        <NavOrb label="Back" />
        <NavOrb label="Forward" flip />
        <div className={clsx(SUNKEN, 'ml-[14px] h-[22px] flex-1 flex items-center pr-1')}>
          <Magnifier />
          <Arrow className="ml-[6px] w-[6px]" />
          <span className="ml-1">Search Results in vista 5728 icons</span>
          <Arrow className="ml-[5px] w-[6px]" />
          <span className="flex-1" />
          <Arrow />
        </div>
        <button aria-label="Refresh" className="ml-[6px] size-5 bg-linear-to-b from-[#6cd06c] to-[#1c9424] border border-[#8cc48c] flex items-center justify-center">
          <svg width="18" height="16" viewBox="0 0 18 16"><path d="M9 2 C7 2 6 4 6 6 H9 L4.500 11 L0 6 H3 C3 3 5 0 9 0 Z M9 14 C11 14 12 12 12 9 H9 L13.500 4 L18 9 H15 C15 13 13 16 9 16 Z" fill="#fff" /></svg>
        </button>
        <div className="relative ml-[6px] w-[185px]">
          <input aria-label="Search" defaultValue="sti" className="w-full h-[22px] px-1 bg-white border border-[#404040] border-r-white outline-none" />
          <span className="absolute left-[17px] top-1 w-px h-[14px] bg-black" />
          <div className="absolute left-0 top-[21px] z-10 w-[204px] h-[45px] bg-white border border-black shadow-[3px_3px_2px_rgba(0,0,0,0.45)] flex flex-col">
            <span className="pl-1 pt-[3px] leading-[19px] text-[#848484]">Add a search filter</span>
            <div className="flex flex-1">
              <button className={clsx(RAISED, 'w-[83px] bg-[#d4d0c8]')}>Date modified:</button>
              <button className={clsx(RAISED, 'w-[37px] bg-[#d4d0c8]')}>Size:</button>
            </div>
          </div>
          <svg width="9" height="17" viewBox="0 0 9 17" className="absolute left-[70px] top-[6px] z-20" stroke="#000" fill="none"><path d="M1 1.500 H4 M5 1.500 H8 M4.500 2 V15 M1 15.500 H4 M5 15.500 H8" strokeWidth="1.300" /></svg>
        </div>
        <button aria-label="Clear search" className="ml-px size-[18px] -mr-[3px] bg-linear-to-b from-[#78a4e4] to-[#1c50b8] border border-[#7c9ccc] flex items-center justify-center">
          <svg width="8" height="8" viewBox="0 0 8 8" stroke="#fff" strokeWidth="2"><path d="M1 1 L7 7 M7 1 L1 7" /></svg>
        </button>
      </div>
      <div className="h-8 shrink-0 flex items-center pl-[13px]">
        <button className="flex items-center gap-2">Organize <Arrow /></button>
      </div>
      <div className="flex h-[310px] shrink-0 mx-px bg-white">
        <nav className="w-[157px] pt-[10px] pl-px pr-px flex flex-col">
          {places.map(p => (
            <a key={p.label} href="#" className={clsx('h-[19px] shrink-0 flex items-center gap-1 whitespace-nowrap', p.cls)}>{p.icon}{p.label}</a>
          ))}
        </nav>
        <div className="w-[3px] bg-[#d4d0c8]" />
        <div className="flex-1 pt-2 pl-4">
          <button className="w-[98px] flex flex-col items-center">
            <StickyPad />
            <span className={clsx(NOTO, 'leading-[13px] whitespace-nowrap')}><mark className="bg-transparent text-inherit outline-1 -outline-offset-1 outline-black">Sti</mark>kyNot.exe_I006<br />4_0409.ico</span>
          </button>
          <p className="mt-[14px] leading-4">Search again in:</p>
          <div className="mt-[6px] pl-1 flex gap-[14px] leading-4">
            <button className="flex items-center gap-[2px]"><LibraryIcon />Libraries</button>
            <button className="flex items-center gap-[2px]"><ComputerIcon size={16} />Computer</button>
            <button className="flex items-center gap-[2px]"><CustomIcon />Custom...</button>
          </div>
        </div>
      </div>
      <div className={clsx(NOTO, 'flex-1 relative flex flex-col items-end gap-[5px] pt-[10px] pr-[18px]')}>
        <div className="flex items-center">
          <label htmlFor="fname">File name:</label>
          <div className="ml-[6px] w-[209px] h-[23px] flex border border-[#606060] border-r-white border-b-white bg-white p-px">
            <input id="fname" className="flex-1 min-w-0 outline-none px-1" />
            <button aria-label="Recent names" className={clsx(RAISED, 'w-4 bg-[#d4d0c8] flex items-center justify-center')}><Arrow /></button>
          </div>
          <div className="relative ml-[14px] w-[187px] h-[23px] border border-[#606060] border-r-white border-b-white bg-white p-px flex text-[#3c1c3c]">
            <select aria-label="File type" className="appearance-none flex-1 pl-px outline-none bg-transparent whitespace-nowrap">
              <option>Icon files (*.ico;*.icl;*.exe;*.dll)</option>
            </select>
            <span className={clsx(RAISED, 'absolute right-px top-px bottom-px w-4 bg-[#d4d0c8] flex items-center justify-center text-black pointer-events-none')}><Arrow /></span>
          </div>
        </div>
        <div className="flex gap-3">
          <button className="w-[88px] h-[26px] border border-black shadow-[inset_1px_1px_0_#fff,inset_-1px_-1px_0_#606060]">Open</button>
          <button className={clsx(RAISED, 'w-[88px] h-[26px]')}>Cancel</button>
        </div>
        <Grip className="absolute right-px bottom-px" />
      </div>
    </section>
  );
}

/* ---------- taskbar ---------- */

const tasks = [
  { label: 'Windows Explorer', icon: <LibrariesLarge />, active: true },
  { label: 'Mozilla Firefox', icon: <FirefoxIcon size={34} /> },
  { label: 'Google Chrome', icon: <ChromeIcon /> },
  { label: 'Paint', icon: <PaintCup /> },
];

function Taskbar() {
  return (
    <footer className="absolute inset-x-0 bottom-0 h-11 flex items-stretch pt-1 pb-[2px] pl-[2px] bg-[#d4d0c8] shadow-[inset_0_1px_0_#d4d0c8,inset_0_2px_0_#fff]">
      <button className={clsx(RAISED, NOTO, 'w-[53px] flex items-center justify-center gap-px font-bold text-black')}><WindowsFlag />Start</button>
      <div className="ml-2 flex gap-[2px]">
        {tasks.map(t => (
          <button key={t.label} aria-label={t.label} className={clsx('w-12 flex items-center justify-center', t.active ? 'bg-[#fafafa] border border-t-[#404040] border-l-[#404040] border-r-white border-b-white' : RAISED)}>{t.icon}</button>
        ))}
      </div>
      <span className="flex-1" />
      <div className={clsx(SUNKEN, 'w-[174px] flex items-center pl-[5px] border-r-0 text-[#1c1c1c]')}>
        <svg width="8" height="10" viewBox="0 0 8 10" fill="none" stroke="#000" strokeWidth="1.400"><path d="M1 4 L4 1 L7 4 M1 9 L4 6 L7 9" /></svg>
        <svg width="18" height="18" viewBox="0 0 18 18" className="ml-[9px]"><path d="M2 1 V17" stroke="#555" strokeWidth="1.500" /><path d="M3 2 C6 0 8 5 14 2 V9 C9 12 7 7 3 10 Z" fill="#f8f8f8" stroke="#666" /><circle cx="12" cy="12" r="5" fill="#d83030" /><path d="M10 10 L14 14 M14 10 L10 14" stroke="#fff" strokeWidth="1.600" /></svg>
        <svg width="18" height="18" viewBox="0 0 18 18" className="ml-[6px]" fill="#e8e8e4" stroke="#505050"><rect x="5.500" y="3.500" width="11" height="8" /><path d="M8 14.500 H14 M11 12 V14" /><path d="M1.500 2 V8 H5.500 V2 M3.500 8 V16 H8" fill="none" /></svg>
        <svg width="18" height="18" viewBox="0 0 18 18" className="ml-[6px]"><path d="M1 6 H5 L10 2 V15 L5 11 H1 Z" fill="#f0f0ee" stroke="#555" /><circle cx="12" cy="12" r="5" fill="#fff" stroke="#d83030" strokeWidth="1.500" /><path d="M8.500 8.500 L15.500 15.500" stroke="#d83030" strokeWidth="1.500" /></svg>
        <div className="flex-1 text-center leading-4">9:49 PM<br />6/28/2023</div>
        <svg width="17" height="16" viewBox="0 0 17 16" className="mr-1"><rect x="1" y="2" width="15" height="11" fill="#2c6cc8" stroke="#1c3c74" /><path d="M2 12 L15 12 L15 7 Z" fill="#7cb4f0" /><rect x="5" y="14" width="8" height="2" fill="#666" /></svg>
      </div>
    </footer>
  );
}

export default function App() {
  return (
    <main className="relative h-screen w-full overflow-hidden bg-[#3a6ea5] font-['Roboto','Noto_Sans',sans-serif] text-[11px] text-[#222]">
      <Defs />
      <DesktopIcons />
      <FirefoxWindow />
      <PaintWindow />
      <PropertiesWindow />
      <div className={clsx(FRAME, 'left-[194px] top-[305px] w-[200px] h-[350px]')} />
      <ChangeIconDialog />
      <Taskbar />
    </main>
  );
}
